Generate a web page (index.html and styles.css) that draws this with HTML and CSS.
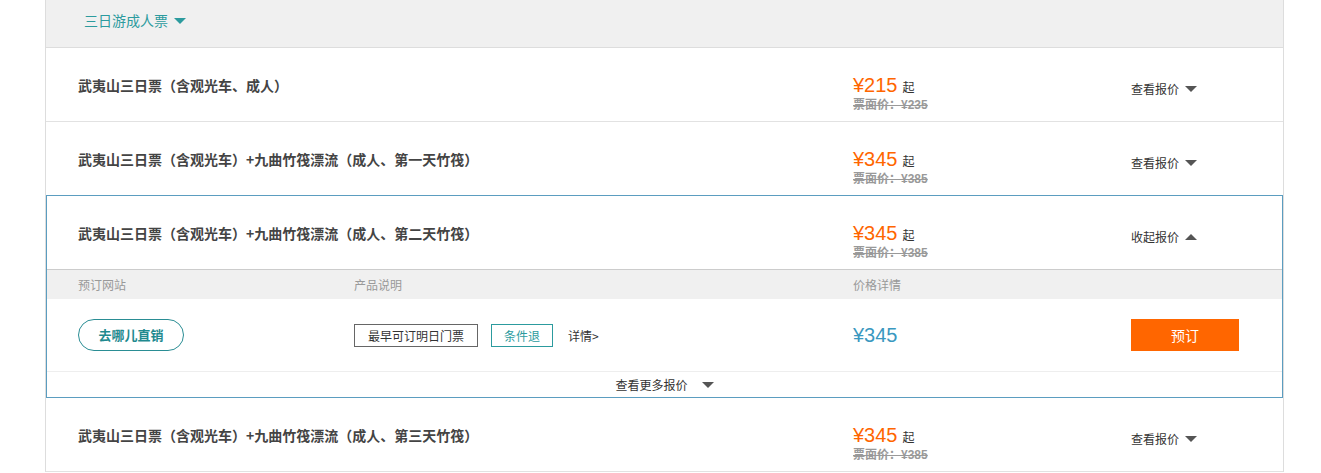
FILE: index.html
```html
<!DOCTYPE html>
<html lang="zh-CN">
<head>
    <meta charset="UTF-8">
    <title>武夷山门票报价</title>
    <link rel="stylesheet" href="styles.css">
</head>
<body>
    <div class="ticket-list">
        <div class="group-head">
            <span class="group-name">三日游成人票</span>
            <span class="tri tri-down tri-teal"></span>
        </div>

        <div class="ticket">
            <div class="ticket-name">武夷山三日票（含观光车、成人）</div>
            <div class="price">
                <div class="price-line"><span class="price-now">¥215</span><span class="qi">起</span></div>
                <div class="price-old">票面价：¥235</div>
            </div>
            <div class="toggle">查看报价 <span class="tri tri-down"></span></div>
        </div>

        <div class="ticket">
            <div class="ticket-name">武夷山三日票（含观光车）+九曲竹筏漂流（成人、第一天竹筏）</div>
            <div class="price">
                <div class="price-line"><span class="price-now">¥345</span><span class="qi">起</span></div>
                <div class="price-old">票面价：¥385</div>
            </div>
            <div class="toggle">查看报价 <span class="tri tri-down"></span></div>
        </div>

        <div class="ticket-open">
            <div class="ticket">
                <div class="ticket-name">武夷山三日票（含观光车）+九曲竹筏漂流（成人、第二天竹筏）</div>
                <div class="price">
                    <div class="price-line"><span class="price-now">¥345</span><span class="qi">起</span></div>
                    <div class="price-old">票面价：¥385</div>
                </div>
                <div class="toggle">收起报价 <span class="tri tri-up"></span></div>
            </div>
            <div class="offer-head">
                <div>预订网站</div>
                <div>产品说明</div>
                <div>价格详情</div>
                <div></div>
            </div>
            <div class="offer">
                <div><span class="site">去哪儿直销</span></div>
                <div class="desc">
                    <span class="tag">最早可订明日门票</span>
                    <span class="tag tag-teal">条件退</span>
                    <span class="more-link">详情&gt;</span>
                </div>
                <div class="offer-price">¥345</div>
                <div><button class="book">预订</button></div>
            </div>
            <div class="more-offers">查看更多报价 <span class="tri tri-down"></span></div>
        </div>

        <div class="ticket">
            <div class="ticket-name">武夷山三日票（含观光车）+九曲竹筏漂流（成人、第三天竹筏）</div>
            <div class="price">
                <div class="price-line"><span class="price-now">¥345</span><span class="qi">起</span></div>
                <div class="price-old">票面价：¥385</div>
            </div>
            <div class="toggle">查看报价 <span class="tri tri-down"></span></div>
        </div>
    </div>
</body>
</html>
```

FILE: styles.css
```css
body {
    margin: 0;
    background: #fff;
    font-family: "Microsoft YaHei", "Noto Sans CJK SC", sans-serif;
    color: #333;
}
.ticket-list {
    margin-left: 45px;
    width: 1239px;
    box-sizing: border-box;
    border-left: 1px solid #ddd;
    border-right: 1px solid #ddd;
}
.group-head {
    height: 48px;
    box-sizing: border-box;
    padding: 10px 0 0 38px;
    background: #f0f0f0;
    border-bottom: 1px solid #ddd;
    display: flex;
    align-items: flex-start;
}
.group-name {
    font-size: 14px;
    line-height: 20px;
    color: #2c9b9e;
}
.tri {
    display: inline-block;
    width: 0;
    height: 0;
    border-left: 6px solid transparent;
    border-right: 6px solid transparent;
}
.tri-down {
    border-top: 6px solid #555;
}
.tri-up {
    border-bottom: 6px solid #555;
}
.group-head .tri {
    margin: 8px 0 0 6px;
}
.tri-teal {
    border-top-color: #2c9b9e;
}
.ticket,
.offer-head,
.offer {
    display: grid;
    grid-template-columns: 276px 499px 278px 1fr;
    padding-left: 32px;
}
.ticket {
    height: 74px;
    box-sizing: border-box;
    padding-top: 27px;
    border-bottom: 1px solid #e2e2e2;
    align-items: start;
}
.ticket-name {
    grid-column: 1 / 3;
    font-size: 14px;
    font-weight: bold;
    line-height: 20px;
    color: #444;
}
.price {
    margin-top: -1px;
    font-family: "Liberation Sans", "Noto Sans CJK SC", sans-serif;
}
.price-now {
    font-size: 20px;
    color: #ff6600;
}
.qi {
    font-size: 12px;
    margin-left: 5px;
    color: #333;
}
.price-old {
    margin-top: -2px;
    font-size: 12px;
    font-weight: bold;
    color: #999;
    text-decoration: line-through;
}
.toggle {
    margin-top: 4px;
    font-size: 12px;
    line-height: 20px;
    color: #333;
    display: flex;
    align-items: center;
}
.toggle .tri {
    margin-left: 6px;
}
.ticket-open {
    margin-top: -1px;
    border: 1px solid #5b9dc0;
}
.ticket-open .ticket {
    height: 73px;
    padding-left: 31px;
    border-bottom: none;
}
.ticket-open .offer-head,
.ticket-open .offer {
    padding-left: 31px;
}
.offer-head {
    height: 30px;
    box-sizing: border-box;
    background: #f0f0f0;
    border-top: 1px solid #ccc;
    align-items: center;
    font-size: 12px;
    color: #999;
}
.offer {
    height: 73px;
    box-sizing: border-box;
    border-bottom: 1px solid #eee;
    align-items: center;
}
.site {
    display: inline-block;
    width: 106px;
    height: 32px;
    box-sizing: border-box;
    border: 1px solid #2a8d94;
    border-radius: 16px;
    text-align: center;
    line-height: 30px;
    font-size: 13px;
    font-weight: bold;
    color: #1f8a8f;
}
.desc {
    display: flex;
    align-items: center;
    font-size: 12px;
}
.tag {
    height: 23px;
    box-sizing: border-box;
    line-height: 21px;
    padding: 0 13px;
    border: 1px solid #666;
    color: #333;
    margin-right: 13px;
}
.tag-teal {
    padding: 0 12px;
    border-color: #2c9b9e;
    color: #2c9b9e;
    margin-right: 15px;
}
.more-link {
    color: #333;
}
.offer-price {
    font-family: "Liberation Sans", "Noto Sans CJK SC", sans-serif;
    font-size: 20px;
    color: #3a98c0;
}
.book {
    width: 108px;
    height: 32px;
    border: none;
    background: #ff6600;
    color: #fff;
    font-family: inherit;
    font-size: 14px;
    padding: 0;
}
.more-offers {
    height: 25px;
    display: flex;
    justify-content: center;
    align-items: center;
    font-size: 12px;
    color: #333;
}
.more-offers .tri {
    margin-left: 14px;
}
```
